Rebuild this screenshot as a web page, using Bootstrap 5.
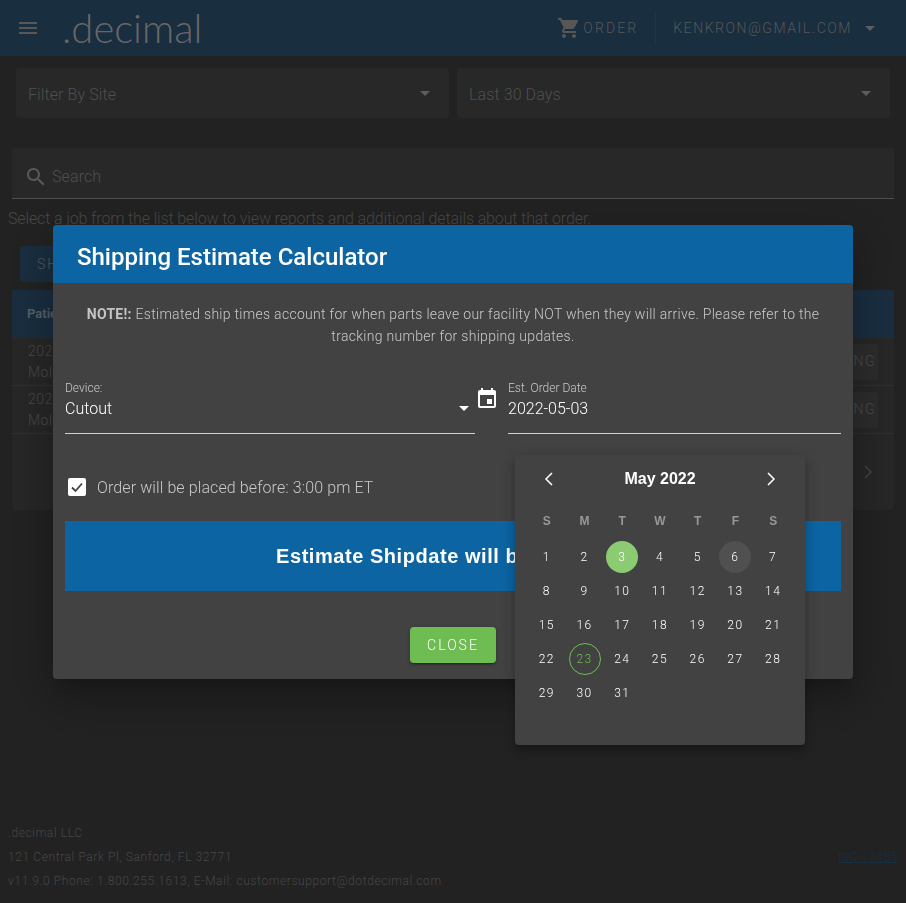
<!DOCTYPE html>
<html lang="en">
<head>
<meta charset="UTF-8">
<title>Orders</title>
<link href="https://cdn.jsdelivr.net/npm/bootstrap@5.3.0/dist/css/bootstrap.min.css" rel="stylesheet">
<style>
html, body { height: 100%; }
body { background: #252525; color: #565656; font-family: Roboto, "Liberation Sans", sans-serif; font-weight: 300; overflow: hidden; }
.top-bar { height: 56px; background: #1c3245; padding: 0 31px 0 16px; color: #5f5f5f; }
.top-bar svg { fill: #5f5f5f; }
.brand-text { font-family: Lato, Roboto, sans-serif; font-weight: 300; font-size: 40px; line-height: 56px; margin-left: 22px; color: #707070; }
.top-link { font-size: 14px; letter-spacing: 1.55px; }
.top-order { letter-spacing: 2.1px; margin-left: 2px; }
.top-sep { width: 1px; height: 36px; background: #233a4e; margin: 0 17px; }
.tri { width: 0; height: 0; border-left: 5px solid transparent; border-right: 5px solid transparent; border-top: 5px solid #656565; }
.nav-tri { margin-left: 13px; }
.filter-row { padding: 12px 16px 0; gap: 8px; }
.filter-box { flex: 1; height: 50px; background: #2c2c2c; border-radius: 4px; padding: 0 19px 0 12px; font-size: 16px; letter-spacing: .1px; color: #565656; }
.filter-box span:first-child { padding-top: 3px; }
.search-box { margin: 30px 12px 0; height: 51px; background: #2c2c2c; border-bottom: 1px solid #555; border-radius: 4px 4px 0 0; padding: 7px 12px 0; gap: 4px; font-size: 16px; letter-spacing: .1px; }
.search-box svg { fill: #606060; }
.hint-line { margin: 10px 0 0 8px; font-size: 16px; line-height: 20px; letter-spacing: -.13px; white-space: nowrap; color: #4f4f4f; }
.ship-btn { margin: 17px 0 0 20px; width: 120px; height: 36px; background: #1c3245; border-radius: 4px; font-size: 14px; letter-spacing: 2px; padding: 8px 17px; color: #566; }
.job-card { margin: 8px 12px 0; height: 220px; background: #2a2a2a; border-radius: 0 0 4px 4px; }
.job-head { height: 48px; background: #1c3245; padding: 0 15px; font-size: 13px; font-weight: 700; color: #5a6670; }
.job-row { height: 48px; padding: 0 16px; border-bottom: 1px solid #333; font-size: 14px; line-height: 21px; letter-spacing: .5px; color: #4f4f4f; }
.job-action { height: 36px; padding: 0 2px 0 16px; background: #303030; border-radius: 4px; font-size: 14px; letter-spacing: 1.5px; color: #505050; }
.job-foot { height: 76px; padding-right: 20px; }
.job-foot svg { stroke: #484848; fill: none; stroke-width: 1.5; }
.page-foot { position: absolute; left: 8px; right: 8px; top: 821px; font-size: 12px; line-height: 24px; letter-spacing: .6px; color: #4d4d4d; }
.page-foot a { color: #1c3245; }
.ship-dialog { max-width: 800px; margin: 225px auto 0; }
.modal { background: rgba(0, 0, 0, .08); }
.ship-content { background: #424242; border: 0; border-radius: 4px; height: 454px; box-shadow: 0 11px 15px -7px rgba(0,0,0,.2), 0 24px 38px 3px rgba(0,0,0,.14), 0 9px 46px 8px rgba(0,0,0,.12); color: #fff; font-weight: 300; }
.ship-head { height: 58px; background: #0c64a3; padding: 0 24px; font-size: 24px; line-height: 65px; font-weight: 500; border-radius: 4px 4px 0 0; }
.ship-note { padding: 20px 24px 0; font-size: 14px; line-height: 22px; letter-spacing: .29px; color: #c9c9c9; text-align: center; height: 96px; }
.ship-note strong { font-weight: 700; color: #c4c4c4; }
.field-row { padding: 0 12px; height: 55px; }
.ship-field { border-bottom: 1px solid #cfcfcf; height: 55px; }
.field-label { font-size: 12px; line-height: 18px; color: #c9c9c9; }
.field-value { font-size: 16px; line-height: 24px; color: #fff; }
.device-field { width: 410px; position: relative; }
.device-field .tri { border-top-color: #fff; position: absolute; right: 6px; top: 27px; }
.date-icon { width: 33px; padding-top: 8px; }
.date-icon svg { fill: #fff; display: block; }
.date-field { width: 333px; }
.check-row { padding: 44px 15px 0; gap: 11px; font-size: 16px; line-height: 20px; letter-spacing: .1px; color: #c9c9c9; height: 87px; }
.check-mark { width: 18px; height: 18px; background: #fff; border-radius: 2px; }
.ship-result { margin: 0 12px; height: 70px; background: #0c64a3; color: #fff; font-family: "Liberation Sans", sans-serif; font-weight: 700; font-size: 20px; line-height: 70px; letter-spacing: .55px; text-align: center; }
.ship-actions { padding-top: 36px; }
.close-btn { width: 86px; height: 36px; padding: 0; background: #6fbd52; border: 0; border-radius: 4px; color: #fff; font-size: 14px; font-weight: 300; letter-spacing: 2px; box-shadow: 0 3px 1px -2px rgba(0,0,0,.2), 0 2px 2px rgba(0,0,0,.14), 0 1px 5px rgba(0,0,0,.12); }
.date-pop { position: absolute; left: 462px; top: 230px; width: 290px; height: 290px; background: #424242; border-radius: 4px; padding: 0 13px; box-shadow: 0 5px 5px -3px rgba(0,0,0,.2), 0 8px 10px 1px rgba(0,0,0,.14), 0 3px 14px 2px rgba(0,0,0,.12); }
.pop-head { height: 48px; padding: 0 11px; font-family: "Liberation Sans", sans-serif; font-weight: 700; font-size: 16px; }
.pop-head svg { stroke: #fff; fill: none; stroke-width: 1.5; }
.day-grid { display: grid; grid-template-columns: repeat(7, 1fr); grid-template-rows: 35px; grid-auto-rows: 34px; font-size: 12px; letter-spacing: 1.5px; margin-top: 2px; }
.day-name { font-family: "Liberation Sans", sans-serif; font-weight: 700; letter-spacing: 0; color: #989898; height: 32px; }
.day-cell { display: flex; align-items: center; justify-content: center; }
.day-cell span { width: 32px; height: 32px; border-radius: 50%; display: flex; align-items: center; justify-content: center; }
.day-picked { background: #8bcb72; }
.day-hover { background: #505050; }
.day-today { border: 1px solid #6fbd52; color: #6fbd52; }
</style>
</head>
<body>
<nav class="top-bar d-flex align-items-center">
    <svg width="24" height="24" viewBox="0 0 24 24"><path d="M3 18h18v-2H3v2zm0-5h18v-2H3v2zm0-7v2h18V6H3z"/></svg>
    <span class="brand-text">.decimal</span>
    <div class="ms-auto d-flex align-items-center">
        <svg width="24" height="24" viewBox="0 0 24 24"><path d="M7 18c-1.1 0-1.99.9-1.99 2S5.9 22 7 22s2-.9 2-2-.9-2-2-2zM1 2v2h2l3.6 7.59-1.35 2.45c-.16.28-.25.61-.25.96 0 1.1.9 2 2 2h12v-2H7.42c-.14 0-.25-.11-.25-.25l.03-.12.9-1.63h7.45c.75 0 1.41-.41 1.75-1.03l3.58-6.49c.08-.14.12-.31.12-.48 0-.55-.45-1-1-1H5.21l-.94-2H1zm16 16c-1.1 0-1.99.9-1.99 2s.89 2 1.99 2 2-.9 2-2-.9-2-2-2z"/></svg>
        <span class="top-link top-order">ORDER</span>
        <span class="top-sep"></span>
        <span class="top-link">KENKRON@GMAIL.COM</span>
        <span class="tri nav-tri"></span>
    </div>
</nav>

<div class="filter-row d-flex">
    <div class="filter-box d-flex align-items-center justify-content-between"><span>Filter By Site</span><span class="tri"></span></div>
    <div class="filter-box d-flex align-items-center justify-content-between"><span>Last 30 Days</span><span class="tri"></span></div>
</div>

<div class="search-box d-flex align-items-center">
    <svg width="24" height="24" viewBox="0 0 24 24"><path d="M15.5 14h-.79l-.28-.27C15.41 12.59 16 11.11 16 9.5 16 5.91 13.09 3 9.5 3S3 5.91 3 9.5 5.91 16 9.5 16c1.61 0 3.09-.59 4.23-1.57l.27.28v.79l5 4.99L20.49 19l-4.99-5zm-6 0C7.01 14 5 11.99 5 9.5S7.01 5 9.5 5 14 7.01 14 9.5 11.99 14 9.5 14z"/></svg>
    <span>Search</span>
</div>
<p class="hint-line mb-0">Select a job from the list below to view reports and additional details about that order.</p>
<div class="ship-btn">SHIPPING</div>

<div class="job-card">
    <div class="job-head d-flex align-items-center">Patient</div>
    <div class="job-row d-flex align-items-center justify-content-between">
        <div>2022-05-03<br>Molded</div>
        <div class="job-action d-flex align-items-center">TRACKING</div>
    </div>
    <div class="job-row d-flex align-items-center justify-content-between">
        <div>2022-05-02<br>Molded</div>
        <div class="job-action d-flex align-items-center">TRACKING</div>
    </div>
    <div class="job-foot d-flex align-items-center justify-content-end">
        <svg width="12" height="16" viewBox="0 0 12 16"><polyline points="3,2 9,8 3,14"/></svg>
    </div>
</div>

<footer class="page-foot d-flex justify-content-between align-items-center">
    <div>.decimal LLC<br>121 Central Park Pl, Sanford, FL 32771<br>v11.9.0 Phone: 1.800.255.1613, E-Mail: customersupport@dotdecimal.com</div>
    <a href="#">ISO 13485</a>
</footer>

<div class="modal d-block" tabindex="-1">
    <div class="modal-dialog ship-dialog">
        <div class="modal-content ship-content">
            <div class="ship-head">Shipping Estimate Calculator</div>
            <div class="ship-note"><strong>NOTE!:</strong> Estimated ship times account for when parts leave our facility NOT when they will arrive. Please refer to the tracking number for shipping updates.</div>
            <div class="field-row d-flex">
                <div class="ship-field device-field">
                    <div class="field-label">Device:</div>
                    <div class="field-value">Cutout</div>
                    <span class="tri"></span>
                </div>
                <div class="date-icon">
                    <svg width="24" height="24" viewBox="0 0 24 24"><path d="M17 12h-5v5h5v-5zM16 1v2H8V1H6v2H5c-1.11 0-1.99.9-1.99 2L3 19c0 1.1.89 2 2 2h14c1.1 0 2-.9 2-2V5c0-1.1-.9-2-2-2h-1V1h-2zm3 18H5V8h14v11z"/></svg>
                </div>
                <div class="ship-field date-field">
                    <div class="field-label">Est. Order Date</div>
                    <div class="field-value">2022-05-03</div>
                </div>
            </div>
            <div class="check-row d-flex align-items-start">
                <span class="check-mark d-flex align-items-center justify-content-center">
                    <svg width="14" height="14" viewBox="0 0 14 14"><polyline points="2,7.5 5.5,11 12,3.5" fill="none" stroke="#424242" stroke-width="1.8"/></svg>
                </span>
                <span>Order will be placed before: 3:00 pm ET</span>
            </div>
            <div class="ship-result">Estimate Shipdate will be 5/06/2022</div>
            <div class="ship-actions d-flex justify-content-center">
                <button type="button" class="btn close-btn">CLOSE</button>
            </div>

            <div class="date-pop">
                <div class="pop-head d-flex align-items-center justify-content-between">
                    <svg width="20" height="20" viewBox="0 0 20 20"><polyline points="13,4 7,10 13,16"/></svg>
                    <span>May 2022</span>
                    <svg width="20" height="20" viewBox="0 0 20 20"><polyline points="7,4 13,10 7,16"/></svg>
                </div>
                <div class="day-grid" id="dayGrid"></div>
            </div>
        </div>
    </div>
</div>

<script src="https://cdn.jsdelivr.net/npm/bootstrap@5.3.0/dist/js/bootstrap.bundle.min.js"></script>
<script>
const dayGrid = document.getElementById("dayGrid");
["S", "M", "T", "W", "T", "F", "S"].forEach(d => {
    dayGrid.innerHTML += `<div class="day-cell day-name">${d}</div>`;
});
for (let d = 1; d <= 31; d++) {
    let cls = "";
    if (d === 3) cls = "day-picked";
    if (d === 6) cls = "day-hover";
    if (d === 23) cls = "day-today";
    dayGrid.innerHTML += `<div class="day-cell"><span class="${cls}">${d}</span></div>`;
}
</script>
</body>
</html>
